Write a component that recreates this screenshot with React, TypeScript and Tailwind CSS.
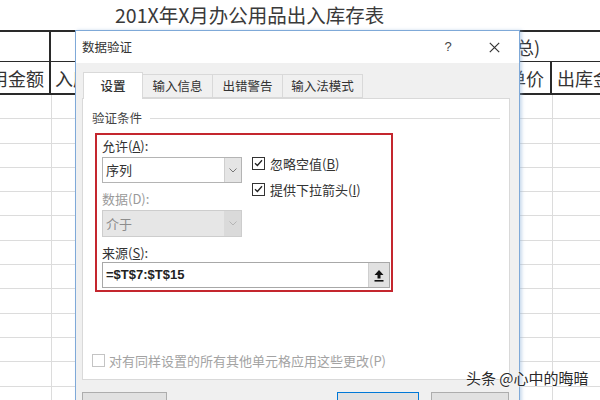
import React from "react";

const rows = Array.from({ length: 13 });

function Check({ disabled }: { disabled?: boolean }) {
  return (
    <div
      className={
        "w-[13px] h-[13px] border bg-white flex items-center justify-center shrink-0 " +
        (disabled ? "border-[#c4c4c4]" : "border-[#333]")
      }
    >
      {!disabled && (
        <svg width="9" height="8" viewBox="0 0 9 8">
          <path d="M1 4.2 L3.4 6.5 L8 1.2" fill="none" stroke="#222" strokeWidth="1.3" />
        </svg>
      )}
    </div>
  );
}

function Chevron({ color }: { color: string }) {
  return (
    <svg width="8" height="5" viewBox="0 0 8 5">
      <path d="M0.5 0.5 L4 4 L7.5 0.5" fill="none" stroke={color} strokeWidth="1" />
    </svg>
  );
}

export default function App() {
  return (
    <div className="relative w-[600px] h-[400px] overflow-hidden bg-white font-['Noto_Sans_CJK_SC',sans-serif] text-[#333]">
      {/* Spreadsheet */}
      <div className="h-[30px] pl-[115px] flex items-center text-[19.5px] text-[#3a3a3a] leading-none">
        201X年X月办公用品出入库存表
      </div>
      <div className="flex h-[32px] border-t-2 border-b-[1.5px] border-[#2a2a2a]">
        <div className="w-[51px] border-r-2 border-[#2a2a2a]" />
        <div className="flex-1 flex items-center justify-end pr-[60px] text-[18px] leading-none">
          入库(汇总)
        </div>
      </div>
      <div className="flex h-[33px] border-b-2 border-[#2a2a2a] text-[18px] leading-none">
        <div className="w-[51px] border-r-2 border-[#2a2a2a] overflow-hidden flex items-center justify-end pr-[5px] whitespace-nowrap">
          用金额
        </div>
        <div className="w-[501px] border-r-2 border-[#2a2a2a] flex items-center justify-between pl-[4px] pr-[6px]">
          <span>入库数量</span>
          <span>单价</span>
        </div>
        <div className="flex-1 flex items-center pl-[5px] whitespace-nowrap overflow-hidden">出库金额</div>
      </div>
      {rows.map((_, i) => (
        <div key={i} className="flex h-[24.3px] border-b border-[#dcdcdc]">
          <div className="w-[52px] border-r border-[#dcdcdc]" />
          <div className="w-[501px] border-r border-[#dcdcdc]" />
          <div className="flex-1" />
        </div>
      ))}

      {/* Dialog */}
      <div className="absolute left-[75px] top-[30px] w-[445px] h-[410px] border border-[#7fa9d8] bg-[#f0f0f0] shadow-[2px_0_3px_rgba(140,175,215,0.45)] flex flex-col">
        <div className="h-[32px] bg-white flex items-center justify-between pl-[6px] shrink-0">
          <span className="text-[12.5px] text-[#333]">数据验证</span>
          <div className="flex items-center gap-[26px] pr-[15px]">
            <span className="w-[20px] text-center text-[13px] font-['Liberation_Sans',sans-serif] text-[#444]">?</span>
            <span className="w-[20px] flex justify-center">
              <svg width="11" height="11" viewBox="0 0 11 11">
                <path d="M0.8 0.8 L10.2 10.2 M10.2 0.8 L0.8 10.2" stroke="#333" strokeWidth="1.2" />
              </svg>
            </span>
          </div>
        </div>
        <div className="px-[6px] pt-[9px] flex flex-col">
          <div className="flex items-end h-[26px] pl-[1px] text-[12.5px]">
            <div className="w-[60px] h-[27px] bg-white border border-[#d9d9d9] border-b-0 -mb-px relative z-10 flex items-center justify-center font-medium text-[#333]">
              设置
            </div>
            <div className="w-[70px] h-[24px] bg-[#f0f0f0] border border-l-0 border-[#d9d9d9] flex items-center justify-center text-[#333]">
              输入信息
            </div>
            <div className="w-[70px] h-[24px] bg-[#f0f0f0] border border-l-0 border-[#d9d9d9] flex items-center justify-center text-[#333]">
              出错警告
            </div>
            <div className="w-[80px] h-[24px] bg-[#f0f0f0] border border-l-0 border-[#d9d9d9] flex items-center justify-center text-[#333]">
              输入法模式
            </div>
          </div>
          <div className="w-[428px] h-[282px] bg-white border border-[#d9d9d9] flex flex-col text-[13px]">
            <div className="mt-[11px] h-[16px] flex items-center gap-[8px] pl-[9px] pr-[9px]">
              <span className="text-[12.5px] text-[#444] leading-none">验证条件</span>
              <div className="flex-1 h-px bg-[#dcdcdc]" />
            </div>
            <div className="ml-[12px] mt-[7px] w-[298px] h-[159px] border-2 border-[#c4262e] pl-[5px] flex flex-col">
              <div className="flex">
                <div className="w-[140px] flex flex-col">
                  <div className="mt-[2px] h-[16px] flex items-center leading-none">
                    允许(<span className="underline">A</span>):
                  </div>
                  <div className="mt-[4px] h-[26px] border border-[#b4b4b4] bg-white flex">
                    <div className="flex-1 flex items-center pl-[3px]">序列</div>
                    <div className="w-[17px] bg-[#e5e5e5] border-l border-[#cfcfcf] flex items-center justify-center">
                      <Chevron color="#777" />
                    </div>
                  </div>
                  <div className="mt-[7px] h-[16px] flex items-center leading-none text-[#9a9a9a]">数据(D):</div>
                  <div className="mt-[4px] h-[27px] border border-[#cdcdcd] bg-[#e6e6e6] flex">
                    <div className="flex-1 flex items-center pl-[3px] text-[#8c8c8c]">介于</div>
                    <div className="w-[17px] bg-[#dadada] flex items-center justify-center">
                      <Chevron color="#b5b5b5" />
                    </div>
                  </div>
                </div>
                <div className="ml-[10px] pt-[20px] flex flex-col gap-[10px]">
                  <div className="h-[16px] flex items-center gap-[5px] leading-none">
                    <Check />
                    <span>
                      忽略空值(<span className="underline">B</span>)
                    </span>
                  </div>
                  <div className="h-[16px] flex items-center gap-[5px] leading-none">
                    <Check />
                    <span>
                      提供下拉箭头(<span className="underline">I</span>)
                    </span>
                  </div>
                </div>
              </div>
              <div className="mt-[7px] h-[16px] flex items-center leading-none">
                来源(<span className="underline">S</span>):
              </div>
              <div className="mt-[2px] h-[26px] w-[288px] border border-[#a8a8a8] bg-white flex">
                <div className="flex-1 flex items-center pl-[3px] font-['Liberation_Sans',sans-serif] font-bold text-[13px] text-[#222]">
                  =$T$7:$T$15
                </div>
                <div className="w-[21px] bg-[#e1e1e1] border-l border-[#cfcfcf] flex items-center justify-center">
                  <svg width="10" height="13" viewBox="0 0 10 13">
                    <path d="M5 1 L9.5 6 L6.5 6 L6.5 9.5 L3.5 9.5 L3.5 6 L0.5 6 Z" fill="#111" />
                    <rect x="0.5" y="11" width="9" height="1.6" fill="#111" />
                  </svg>
                </div>
              </div>
            </div>
            <div className="mt-auto mb-[11px] ml-[9px] h-[16px] flex items-center gap-[4px] leading-none text-[#a3a3a3]">
              <Check disabled />
              <span>对有同样设置的所有其他单元格应用这些更改(P)</span>
            </div>
          </div>
          <div className="mt-[12px] flex text-[12.5px]">
            <div className="w-[85px] h-[30px] bg-[#e1e1e1] border border-[#adadad] flex items-center justify-center">
              全部清除(C)
            </div>
            <div className="ml-[170px] w-[82px] h-[30px] bg-[#e1e1e1] border border-[#0078d7] flex items-center justify-center">
              确定
            </div>
            <div className="ml-[12px] w-[78px] h-[30px] bg-[#e1e1e1] border border-[#adadad] flex items-center justify-center">
              取消
            </div>
          </div>
        </div>
      </div>

      {/* Watermark */}
      <div className="absolute left-[466px] top-[370px] text-[15px] leading-none text-[#2a2a2a] whitespace-nowrap [text-shadow:0_0_2px_#fff,0_0_2px_#fff]">
        头条 @心中的晦暗
      </div>
    </div>
  );
}
